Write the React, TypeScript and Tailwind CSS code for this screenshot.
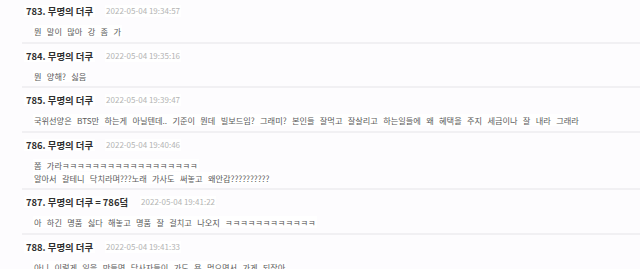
import React from 'react';

type Comment = {
  no: number;
  name: string;
  time: string;
  lines: string[];
};

const comments: Comment[] = [
  { no: 783, name: '무명의 더쿠', time: '2022-05-04 19:34:57', lines: ['뭔 말이 많아 강 좀 가'] },
  { no: 784, name: '무명의 더쿠', time: '2022-05-04 19:35:16', lines: ['뭔 양해? 싫음'] },
  {
    no: 785,
    name: '무명의 더쿠',
    time: '2022-05-04 19:39:47',
    lines: [
      '국위선양은 BTS만 하는게 아닐텐데.. 기준이 뭔데 빌보드임? 그래미? 본인들 잘먹고 잘살리고 하는일들에 왜 혜택을 주지 세금이나 잘 내라 그래라',
    ],
  },
  {
    no: 786,
    name: '무명의 더쿠',
    time: '2022-05-04 19:40:46',
    lines: ['쫌 가라ㅋㅋㅋㅋㅋㅋㅋㅋㅋㅋㅋㅋㅋㅋㅋㅋㅋㅋ', '알아서 갈테니 닥치라며???노래 가사도 써놓고 왜안감??????????'],
  },
  {
    no: 787,
    name: '무명의 더쿠 = 786덬',
    time: '2022-05-04 19:41:22',
    lines: ['아 하긴 명품 싫다 해놓고 명품 잘 걸치고 나오지 ㅋㅋㅋㅋㅋㅋㅋㅋㅋㅋㅋㅋ'],
  },
  {
    no: 788,
    name: '무명의 더쿠',
    time: '2022-05-04 19:41:33',
    lines: ['아니 이렇게 일을 만들면 당사자들이 가도 욕 먹으면서 가게 되잖아'],
  },
];

const font = "font-['Noto_Sans_CJK_KR',_'Noto_Sans',_sans-serif]";

const CommentItem = ({ c, first }: { c: Comment; first: boolean }) => (
  <div className={first ? 'pl-[24px] pt-[5px] pb-[6.5px]' : 'border-t-2 border-[#f1f0f3] ml-[22px] pl-[2px] pt-[6px] pb-[6.5px]'}>
    <div className="flex items-center h-[12px] leading-[12px]">
      <span className="text-[9.4px] font-bold text-[#2f2f2f] bg-white px-[2px]">
        {c.no}. {c.name}
      </span>
      <span className="ml-[10px] text-[8px] text-[#b4b4b4] bg-white px-[1px]">{c.time}</span>
    </div>
    <div className="mt-[5px] pl-[9px]">
      {c.lines.map((l, i) => (
        <div key={i} className="h-[13px] leading-[13px]">
          <span className="text-[8.2px] text-[#5a5a5a] bg-white px-[1px] whitespace-nowrap [word-spacing:3.5px]">{l}</span>
        </div>
      ))}
    </div>
  </div>
);

export default function App() {
  return (
    <div className={`w-[640px] h-[269px] overflow-hidden bg-[#fdfcfe] ${font}`}>
      {comments.map((c, i) => (
        <CommentItem key={c.no} c={c} first={i === 0} />
      ))}
    </div>
  );
}
